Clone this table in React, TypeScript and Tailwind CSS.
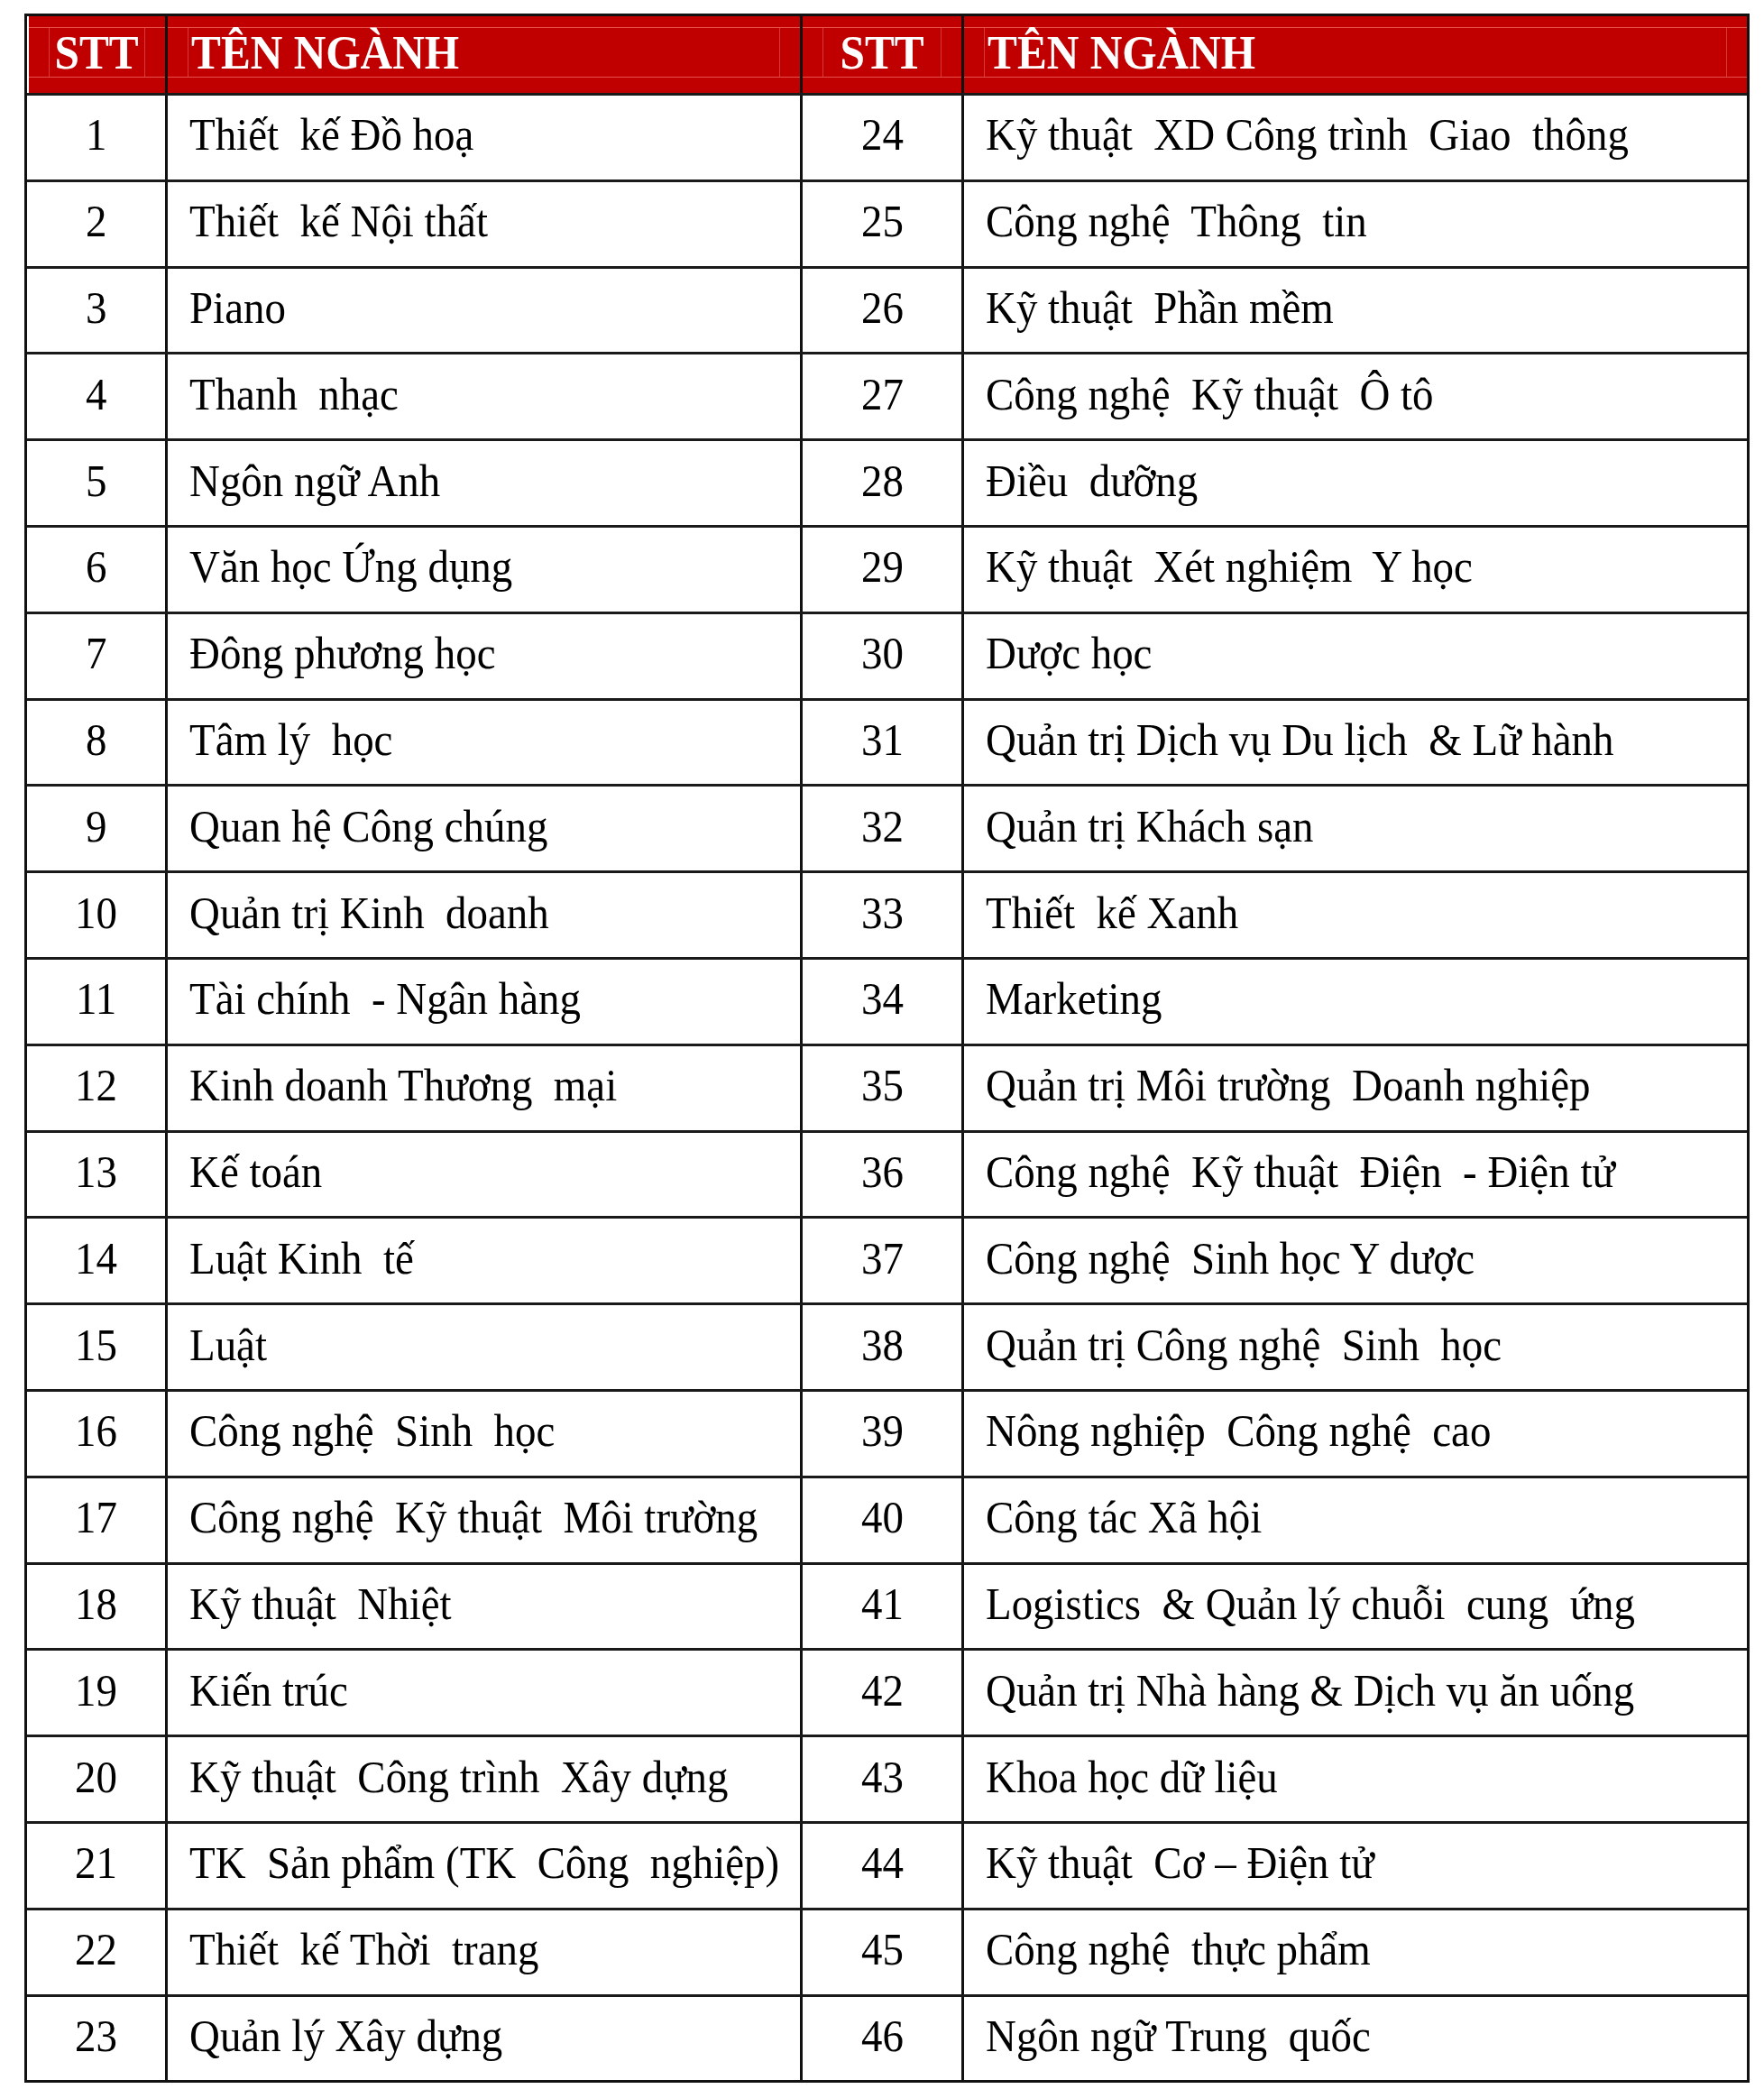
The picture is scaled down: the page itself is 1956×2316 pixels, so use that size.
const ROWS: [string, string][] = [
  ["Thiết  kế Đồ hoạ", "Kỹ thuật  XD Công trình  Giao  thông"],
  ["Thiết  kế Nội thất", "Công nghệ  Thông  tin"],
  ["Piano", "Kỹ thuật  Phần mềm"],
  ["Thanh  nhạc", "Công nghệ  Kỹ thuật  Ô tô"],
  ["Ngôn ngữ Anh", "Điều  dưỡng"],
  ["Văn học Ứng dụng", "Kỹ thuật  Xét nghiệm  Y học"],
  ["Đông phương học", "Dược học"],
  ["Tâm lý  học", "Quản trị Dịch vụ Du lịch  & Lữ hành"],
  ["Quan hệ Công chúng", "Quản trị Khách sạn"],
  ["Quản trị Kinh  doanh", "Thiết  kế Xanh"],
  ["Tài chính  - Ngân hàng", "Marketing"],
  ["Kinh doanh Thương  mại", "Quản trị Môi trường  Doanh nghiệp"],
  ["Kế toán", "Công nghệ  Kỹ thuật  Điện  - Điện tử"],
  ["Luật Kinh  tế", "Công nghệ  Sinh học Y dược"],
  ["Luật", "Quản trị Công nghệ  Sinh  học"],
  ["Công nghệ  Sinh  học", "Nông nghiệp  Công nghệ  cao"],
  ["Công nghệ  Kỹ thuật  Môi trường", "Công tác Xã hội"],
  ["Kỹ thuật  Nhiệt", "Logistics  & Quản lý chuỗi  cung  ứng"],
  ["Kiến trúc", "Quản trị Nhà hàng & Dịch vụ ăn uống"],
  ["Kỹ thuật  Công trình  Xây dựng", "Khoa học dữ liệu"],
  ["TK  Sản phẩm (TK  Công  nghiệp)", "Kỹ thuật  Cơ – Điện tử"],
  ["Thiết  kế Thời  trang", "Công nghệ  thực phẩm"],
  ["Quản lý Xây dựng", "Ngôn ngữ Trung  quốc"],
];

// header cell: red band with the faint inner padding guides of the source doc
function HeadCell({ label, center, first }: { label: string; center?: boolean; first?: boolean }) {
  return (
    <div
      className={
        "h-full bg-[#c00000] pt-[12px] pb-[17px] " +
        (first ? "border-l-[2px] border-white" : "border-l-[3px] border-[#111]")
      }
    >
      <div className="h-full border-y border-[#e4504a]">
        <div
          className={
            "flex h-full items-center border-x border-[#d43a36] " +
            (center ? "mx-[22px] justify-center" : "ml-[22px] mr-[22px] pl-[3px]")
          }
        >
          <span
            className={
              "inline-block scale-x-[0.93] text-[53px] font-bold leading-none text-white " +
              (center ? "origin-center" : "origin-left")
            }
          >
            {label}
          </span>
        </div>
      </div>
    </div>
  );
}

function NumCell({ n, first }: { n: number; first?: boolean }) {
  return (
    <div
      className={
        "flex h-full items-center justify-center pb-[5px] " +
        (first ? "" : "border-l-[3px] border-[#111]")
      }
    >
      <span className="inline-block origin-center scale-x-[0.92]">{n}</span>
    </div>
  );
}

function NameCell({ text }: { text: string }) {
  return (
    <div className="flex h-full items-center border-l-[3px] border-[#111] pb-[5px] pl-[24px]">
      <span className="inline-block origin-left scale-x-[0.92] whitespace-pre">{text}</span>
    </div>
  );
}

export default function App() {
  return (
    <div
      className="h-[2316px] w-[1956px] bg-white pl-[27px] pt-[15px]"
      style={{ fontFamily: '"Liberation Serif", "Times New Roman", serif' }}
    >
      <div className="w-[1913px] border-[3px] border-[#111] text-[51px] leading-none text-black">
        {/* header */}
        <div className="grid h-[85px] grid-cols-[153px_704px_179px_871px]">
          <HeadCell label="STT" center first />
          <HeadCell label="TÊN NGÀNH" />
          <HeadCell label="STT" center />
          <HeadCell label="TÊN NGÀNH" />
        </div>

        {/* body */}
        {ROWS.map(([left, right], i) => (
          <div
            key={i}
            className="grid h-[95.8px] grid-cols-[153px_704px_179px_871px] border-t-[3px] border-[#1a1a1a]"
          >
            <NumCell n={i + 1} first />
            <NameCell text={left} />
            <NumCell n={i + 24} />
            <NameCell text={right} />
          </div>
        ))}
      </div>
    </div>
  );
}
